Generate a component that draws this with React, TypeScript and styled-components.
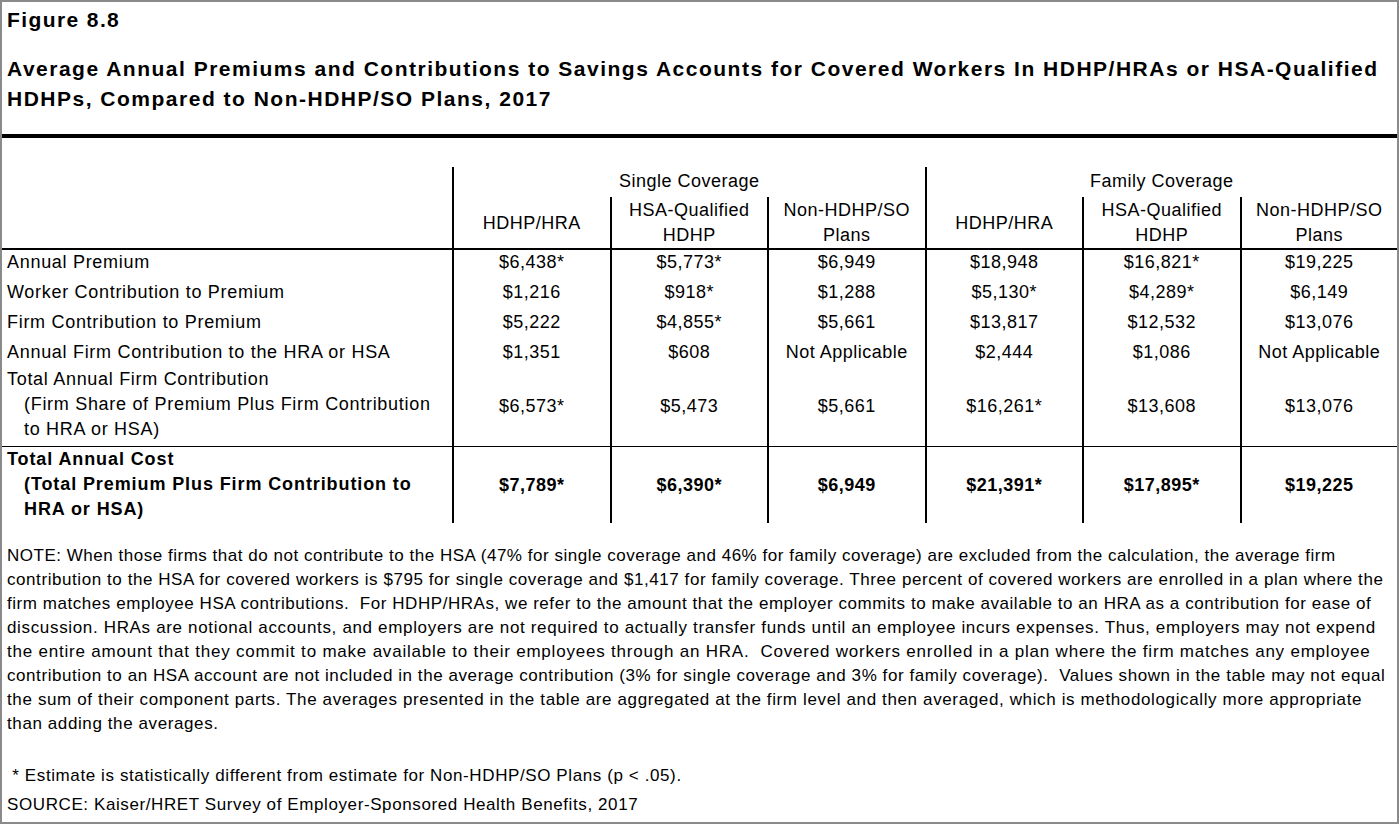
import React from "react";
import styled, { createGlobalStyle } from "styled-components";

const GlobalStyle = createGlobalStyle`
  html, body {
    margin: 0;
    padding: 0;
    background: #ffffff;
  }
  body {
    font-family: "Liberation Sans", Arial, sans-serif;
    color: #000000;
  }
`;

const Frame = styled.div`
  width: 1399px;
  height: 824px;
  box-sizing: border-box;
  border: 2px solid #8a8a8a;
  display: flex;
  flex-direction: column;
  overflow: hidden;
  background: #ffffff;
`;

const Header = styled.header`
  padding: 3px 5px 0;
`;

const FigureLabel = styled.div`
  font-weight: bold;
  font-size: 21px;
  line-height: 30px;
  letter-spacing: 1.4px;
`;

const Title = styled.h1`
  margin: 19px 0 0;
  font-weight: bold;
  font-size: 21px;
  line-height: 30px;
  letter-spacing: 1.5px;
`;

const Rule = styled.div`
  height: 4px;
  background: #000000;
  margin-top: 20px;
`;

const Table = styled.div`
  margin-top: 29px;
  display: flex;
  flex-direction: column;
  font-size: 18px;
  letter-spacing: 0.5px;
`;

const Row = styled.div<{ $h: number; $bottom?: boolean; $bold?: boolean }>`
  display: grid;
  grid-template-columns: 450px repeat(6, 1fr);
  height: ${(p) => p.$h}px;
  box-sizing: border-box;
  border-bottom: ${(p) => (p.$bottom ? "1px solid #000" : "none")};
  font-weight: ${(p) => (p.$bold ? "bold" : "normal")};
`;

const HeaderRule = styled.div`
  height: 2px;
  background: #000000;
`;

const Blank = styled.div``;

const GroupCell = styled.div`
  grid-column: span 3;
  border-left: 2px solid #000;
  text-align: center;
  line-height: 28px;
`;

const HeadCell = styled.div`
  border-left: 2px solid #000;
  display: flex;
  align-items: center;
  justify-content: center;
  text-align: center;
  line-height: 25px;
  padding-top: 1px;
`;

const Label = styled.div<{ $lh: number; $bold?: boolean }>`
  padding-left: 5px;
  line-height: ${(p) => p.$lh}px;
  letter-spacing: ${(p) => (p.$bold ? "0.9px" : "0.7px")};
  white-space: nowrap;
`;

const Indent = styled.div`
  padding-left: 17px;
`;

const Value = styled.div<{ $lh: number; $center?: boolean }>`
  border-left: 2px solid #000;
  text-align: center;
  line-height: ${(p) => p.$lh}px;
  display: flex;
  justify-content: center;
  align-items: ${(p) => (p.$center ? "center" : "flex-start")};
  white-space: nowrap;
`;

const Notes = styled.section`
  margin-top: 21px;
  padding-left: 5px;
  font-size: 17px;
  letter-spacing: 0.6px;
`;

const NoteLine = styled.div<{ $ls: number }>`
  line-height: 24px;
  white-space: pre;
  letter-spacing: ${(p) => p.$ls}px;
`;

const Footnotes = styled.div`
  margin-top: 25px;
`;

const FootLine = styled.div`
  line-height: 29px;
  white-space: pre;
`;

type DataRow = {
  label: string[];
  values: string[];
  h: number;
  lh: number;
  center?: boolean;
  bold?: boolean;
  bottom?: boolean;
};

const rows: DataRow[] = [
  {
    label: ["Annual Premium"],
    values: ["$6,438*", "$5,773*", "$6,949", "$18,948", "$16,821*", "$19,225"],
    h: 30,
    lh: 24,
  },
  {
    label: ["Worker Contribution to Premium"],
    values: ["$1,216", "$918*", "$1,288", "$5,130*", "$4,289*", "$6,149"],
    h: 30,
    lh: 24,
  },
  {
    label: ["Firm Contribution to Premium"],
    values: ["$5,222", "$4,855*", "$5,661", "$13,817", "$12,532", "$13,076"],
    h: 30,
    lh: 24,
  },
  {
    label: ["Annual Firm Contribution to the HRA or HSA"],
    values: ["$1,351", "$608", "Not Applicable", "$2,444", "$1,086", "Not Applicable"],
    h: 27,
    lh: 24,
  },
  {
    label: [
      "Total Annual Firm Contribution",
      "(Firm Share of Premium Plus Firm Contribution",
      "to HRA or HSA)",
    ],
    values: ["$6,573*", "$5,473", "$5,661", "$16,261*", "$13,608", "$13,076"],
    h: 80,
    lh: 25,
    center: true,
    bottom: true,
  },
  {
    label: [
      "Total Annual Cost",
      "(Total Premium Plus Firm Contribution to",
      "HRA or HSA)",
    ],
    values: ["$7,789*", "$6,390*", "$6,949", "$21,391*", "$17,895*", "$19,225"],
    h: 76,
    lh: 25,
    center: true,
    bold: true,
  },
];

const heads: string[][] = [
  ["HDHP/HRA"],
  ["HSA-Qualified", "HDHP"],
  ["Non-HDHP/SO", "Plans"],
  ["HDHP/HRA"],
  ["HSA-Qualified", "HDHP"],
  ["Non-HDHP/SO", "Plans"],
];

const noteLines: { text: string; ls: number }[] = [
  {
    text: "NOTE: When those firms that do not contribute to the HSA (47% for single coverage and 46% for family coverage) are excluded from the calculation, the average firm",
    ls: 0.52,
  },
  {
    text: "contribution to the HSA for covered workers is $795 for single coverage and $1,417 for family coverage. Three percent of covered workers are enrolled in a plan where the",
    ls: 0.57,
  },
  {
    text: "firm matches employee HSA contributions.  For HDHP/HRAs, we refer to the amount that the employer commits to make available to an HRA as a contribution for ease of",
    ls: 0.55,
  },
  {
    text: "discussion. HRAs are notional accounts, and employers are not required to actually transfer funds until an employee incurs expenses. Thus, employers may not expend",
    ls: 0.66,
  },
  {
    text: "the entire amount that they commit to make available to their employees through an HRA.  Covered workers enrolled in a plan where the firm matches any employee",
    ls: 0.79,
  },
  {
    text: "contribution to an HSA account are not included in the average contribution (3% for single coverage and 3% for family coverage).  Values shown in the table may not equal",
    ls: 0.57,
  },
  {
    text: "the sum of their component parts. The averages presented in the table are aggregated at the firm level and then averaged, which is methodologically more appropriate",
    ls: 0.63,
  },
  { text: "than adding the averages.", ls: 0.6 },
];

export default function App() {
  return (
    <>
      <GlobalStyle />
      <Frame>
        <Header>
          <FigureLabel>Figure 8.8</FigureLabel>
          <Title>
            Average Annual Premiums and Contributions to Savings Accounts for Covered Workers In HDHP/HRAs or HSA-Qualified
            <br />
            HDHPs, Compared to Non-HDHP/SO Plans, 2017
          </Title>
        </Header>
        <Rule />
        <Table>
          <Row $h={30}>
            <Blank />
            <GroupCell>Single Coverage</GroupCell>
            <GroupCell>Family Coverage</GroupCell>
          </Row>
          <Row $h={51}>
            <Blank />
            {heads.map((h, i) => (
              <HeadCell key={i}>
                <div>
                  {h.map((line, j) => (
                    <div key={j}>{line}</div>
                  ))}
                </div>
              </HeadCell>
            ))}
          </Row>
          <HeaderRule />
          {rows.map((r, i) => (
            <Row key={i} $h={r.h} $bold={r.bold} $bottom={r.bottom}>
              <Label $lh={r.lh} $bold={r.bold}>
                <div>{r.label[0]}</div>
                {r.label.length > 1 && (
                  <Indent>
                    {r.label.slice(1).map((l, j) => (
                      <div key={j}>{l}</div>
                    ))}
                  </Indent>
                )}
              </Label>
              {r.values.map((v, j) => (
                <Value key={j} $lh={r.lh} $center={r.center}>
                  {v}
                </Value>
              ))}
            </Row>
          ))}
        </Table>
        <Notes>
          {noteLines.map((l, i) => (
            <NoteLine key={i} $ls={l.ls}>
              {l.text}
            </NoteLine>
          ))}
          <Footnotes>
            <FootLine>{" * Estimate is statistically different from estimate for Non-HDHP/SO Plans (p < .05)."}</FootLine>
            <FootLine>SOURCE: Kaiser/HRET Survey of Employer-Sponsored Health Benefits, 2017</FootLine>
          </Footnotes>
        </Notes>
      </Frame>
    </>
  );
}
